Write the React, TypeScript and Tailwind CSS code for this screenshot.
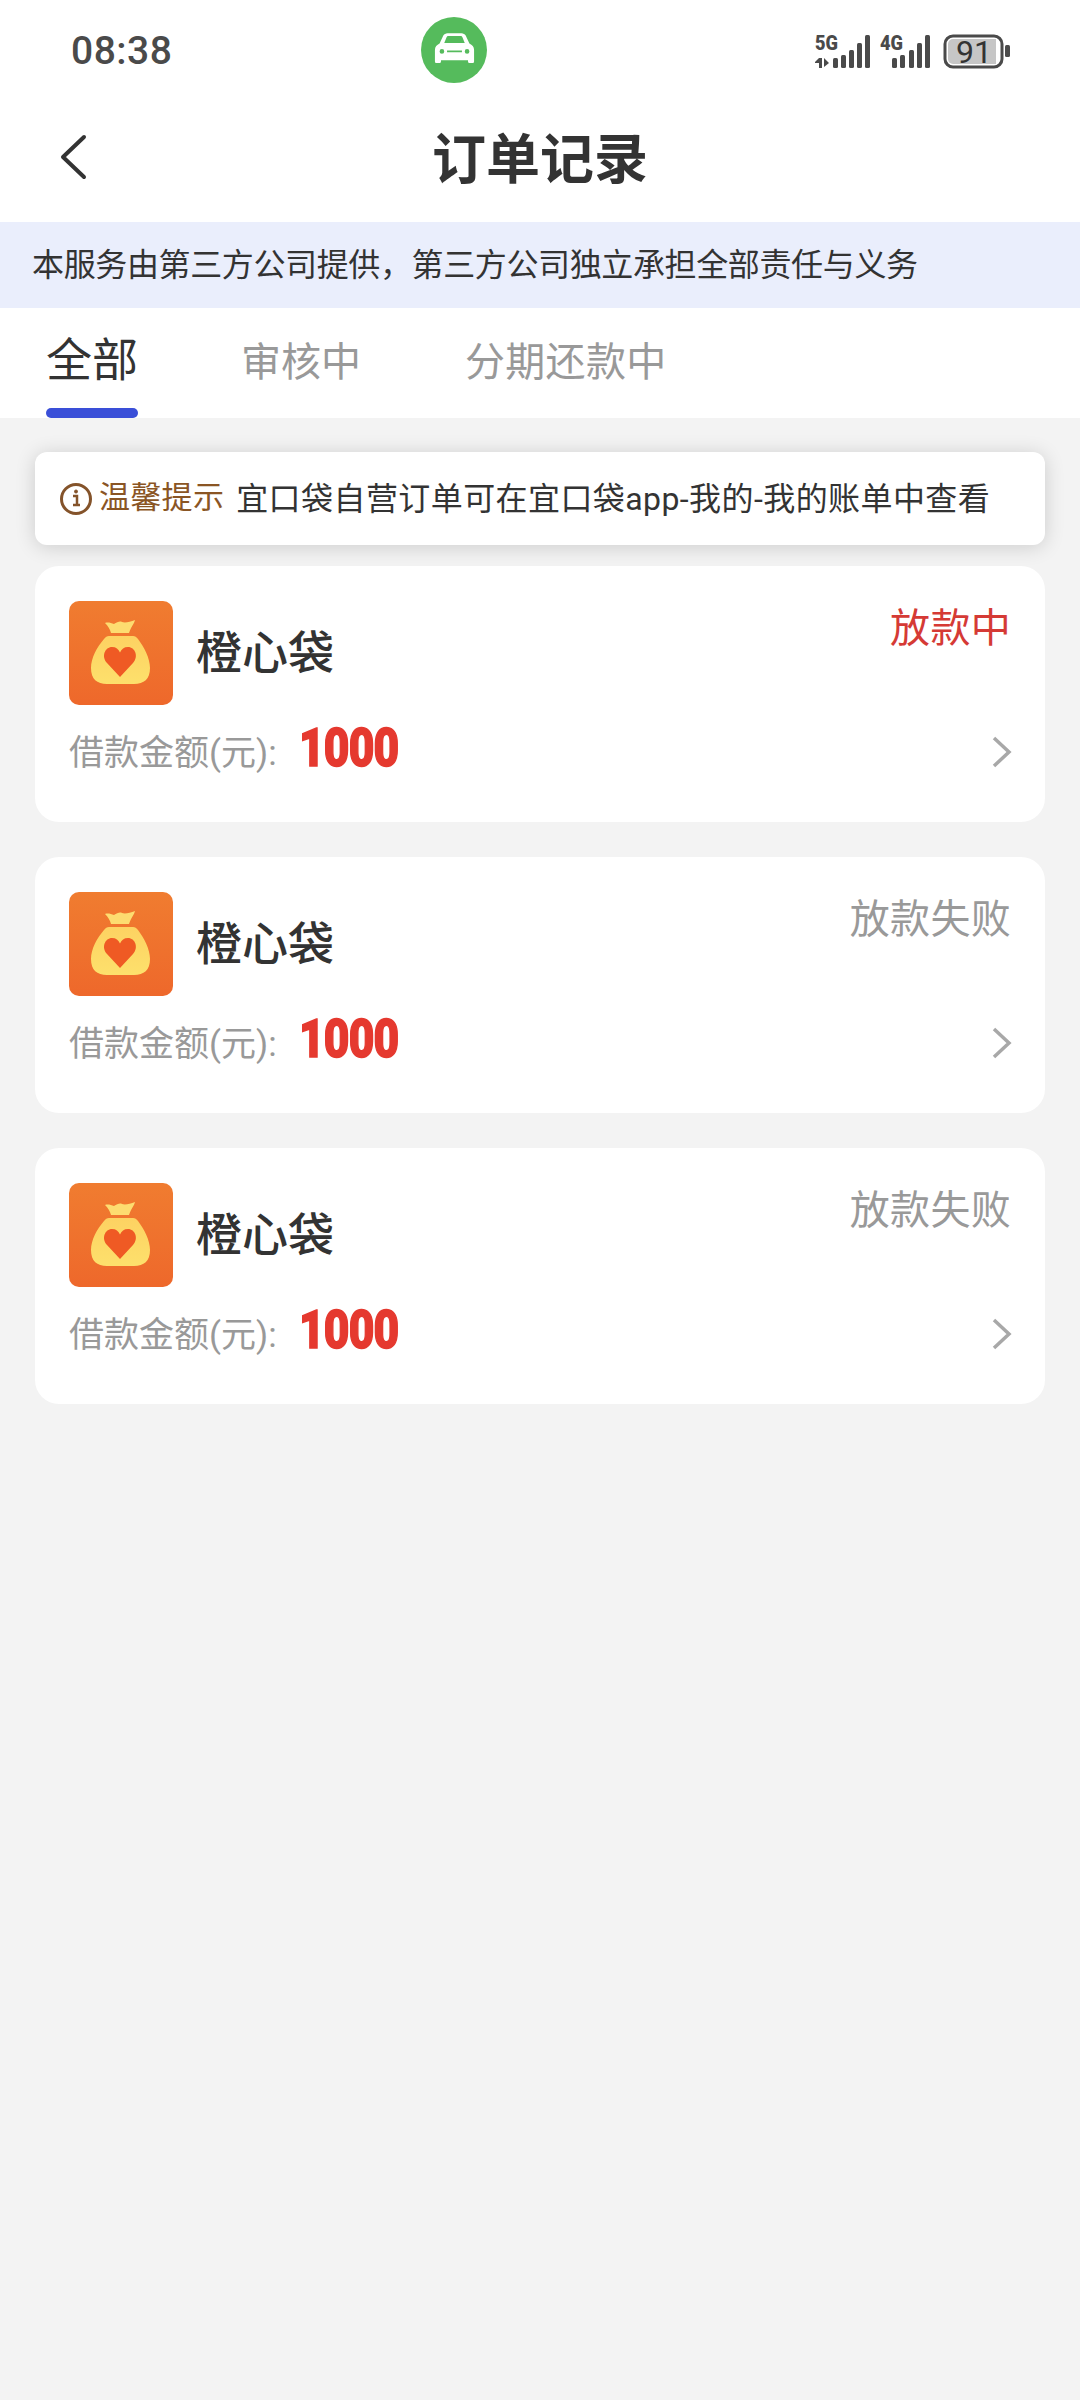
const CJK = "font-['Roboto','Noto_Sans_CJK_SC',sans-serif]";

const orders = [
  { id: 1, status: '放款中', failed: false },
  { id: 2, status: '放款失败', failed: true },
  { id: 3, status: '放款失败', failed: true },
];

const CarBadge = () => (
  <div className="flex h-[66px] w-[66px] items-center justify-center rounded-full bg-[#55bb5c]">
    <svg width="41" height="34" viewBox="0 0 44 36">
      <path
        fill="#fff"
        fillRule="evenodd"
        d="M10 2.5C11 1 12.5 0 14.5 0h15c2 0 3.500 1 4.500 2.500L38 11c3 1.500 5 3.500 5 7v12c0 1.500-.7 2-2 2h-2.500c-1.300 0-2-.7-2-2v-1h-29v1c0 1.300-.7 2-2 2H3c-1.300 0-2-.5-2-2V18c0-3.500 2-5.500 5-7z M11 10.500h22l-2.500-6.200c-.4-.9-1-1.300-2-1.300H15.500c-1 0-1.600.4-2 1.300z M6 19.500a2.500 2.500 0 1 0 5 0a2.500 2.500 0 1 0-5 0z M33 19.500a2.500 2.500 0 1 0 5 0a2.500 2.500 0 1 0-5 0z M14 18.500h16v2H14z"
      />
    </svg>
  </div>
);

const StatusIcons = () => (
  <svg width="200" height="44" viewBox="812 28 200 44">
    <g fill="#4a4a4a">
      <text x="815" y="49" fontFamily="Roboto" fontWeight="900" fontSize="21" textLength="23" lengthAdjust="spacingAndGlyphs">5G</text>
      <path d="M819 57v10h3V57zM815 61l4-4v5h-4zM824 57l5 5-5 4z" />
      <rect x="833" y="57" width="5" height="10" rx="1.500" />
      <rect x="841" y="54" width="5" height="13" rx="1.500" />
      <rect x="849" y="49" width="5" height="18" rx="1.500" />
      <rect x="857" y="42" width="5" height="25" rx="1.500" />
      <rect x="865" y="34" width="5" height="33" rx="1.500" />
      <text x="880" y="49" fontFamily="Roboto" fontWeight="900" fontSize="21" textLength="23" lengthAdjust="spacingAndGlyphs">4G</text>
      <rect x="892" y="57" width="5" height="10" rx="1.500" />
      <rect x="900" y="54" width="5" height="13" rx="1.500" />
      <rect x="909" y="49" width="5" height="18" rx="1.500" />
      <rect x="917" y="42" width="5" height="25" rx="1.500" />
      <rect x="925" y="34" width="5" height="33" rx="1.500" />
    </g>
    <rect x="945" y="35" width="57" height="31" rx="8" fill="#fff" stroke="#4a4a4a" strokeWidth="3" />
    <path d="M948 43a5 5 0 0 1 5-5h43v25h-43a5 5 0 0 1-5-5z" fill="#c6c6c6" />
    <rect x="1005" y="44" width="5" height="12" rx="1.500" fill="#4a4a4a" />
    <text x="956" y="62" fontFamily="Roboto" fontSize="32" fill="#333">91</text>
  </svg>
);

const BagIcon = () => (
  <div className="h-[104px] w-[104px] shrink-0 overflow-hidden rounded-[10px] bg-gradient-to-b from-[#f07c30] to-[#ee682b]">
    <svg width="104" height="104" viewBox="0 0 104 104">
      <defs>
        <linearGradient id="bag" x1="0" y1="0" x2="0" y2="1">
          <stop offset="0" stopColor="#fdd262" />
          <stop offset="1" stopColor="#fde06c" />
        </linearGradient>
      </defs>
      <path d="M36 22c3-1 6 0 9 1 3-2 6-3 8-2 3 1 8 0 13-2-1 4-4 7-6 13H42c-1-4-3-7-6-10z" fill="#fddc70" />
      <path d="M40 35h24c2 0 3.500 1 5 3C75 46 81 57 81 67c0 11-6 16-16 16H38C28 83 22 78 22 67c0-10 6-21 13-29 1.500-2 3-3 5-3z" fill="url(#bag)" />
      <path d="M51 76 38 62C32 55.500 36 46 43 46c4 0 6.500 2 8 5.500C52.500 48 55 46 59 46c7 0 11 9.500 5 16z" fill="#ef5a24" />
    </svg>
  </div>
);

const OrderCard = ({ status, failed }: { status: string; failed: boolean }) => (
  <div className="h-[256px] rounded-[24px] bg-white pl-[34px] pr-[33px] pt-[35px]">
    <div className="flex items-start justify-between">
      <div className="flex items-center gap-[23px]">
        <BagIcon />
        <span className="text-[46px] font-medium leading-none text-[#333]">橙心袋</span>
      </div>
      <span className={`mr-[1px] text-[40px] tracking-[0.3px] leading-[56px] ${failed ? 'text-[#999]' : 'text-[#d53a35]'}`}>{status}</span>
    </div>
    <div className="mt-[16px] flex items-center">
      <span className="pt-[3px] text-[35px] leading-[60px] text-[#999]">借款金额(元):</span>
      <span className="ml-[22px] -mt-[9px] origin-left scale-x-[0.82] text-[54px] font-black leading-[60px] tracking-[-1px] text-[#e5392f] [-webkit-text-stroke:1.5px_#e5392f] [font-family:Roboto]">1000</span>
      <svg className="ml-auto -mt-[2px]" width="20" height="32" viewBox="0 0 20 32" fill="none" stroke="#a8a8a8" strokeWidth="3.500">
        <path d="M2 2l15 14L2 30" />
      </svg>
    </div>
  </div>
);

export default function App() {
  return (
    <div className={`flex h-[2400px] w-[1080px] flex-col overflow-hidden bg-[#f3f3f3] ${CJK}`}>
      <div className="bg-white">
        <div className="flex h-[100px] items-center">
          <span className="w-[421px] pl-[71px] pt-[3px] text-[39px] font-medium tracking-[0.5px] text-[#4a4a4a]">08:38</span>
          <CarBadge />
          <div className="ml-auto mr-[68px] mt-[2px]">
            <StatusIcons />
          </div>
        </div>
        <div className="relative flex h-[122px] items-center justify-center">
          <svg className="absolute left-[60px] top-[34px]" width="28" height="46" viewBox="0 0 28 46" fill="none" stroke="#333" strokeWidth="4" strokeLinecap="round" strokeLinejoin="round">
            <path d="M24 3 3 23l21 20" />
          </svg>
          <span className="text-[54px] font-bold leading-none text-[#333]">订单记录</span>
        </div>
        <div className="flex h-[86px] items-center bg-[#eaeefc] pl-[32px] text-[32px] tracking-[-0.37px] text-[#333]">
          本服务由第三方公司提供，第三方公司独立承担全部责任与义务
        </div>
        <div className="flex h-[110px] pl-[46px]">
          <div className="relative w-[92px] pt-[20px] text-center text-[46px] leading-[64px] text-[#333]">
            全部
            <div className="absolute bottom-0 left-0 h-[10px] w-[92px] rounded-[5px] bg-[#3a4fd8]" />
          </div>
          <div className="ml-[103px] pt-[24px] text-[40px] leading-[62px] text-[#999]">审核中</div>
          <div className="ml-[104px] pt-[24px] text-[40px] leading-[62px] tracking-[0.3px] text-[#999]">分期还款中</div>
        </div>
      </div>
      <div className="flex flex-col px-[35px] pt-[34px]">
        <div className="flex h-[93px] items-center rounded-[12px] bg-white pl-[24px] shadow-[0_2px_20px_rgba(0,0,0,0.16)]">
          <svg width="34" height="34" viewBox="0 0 34 34" fill="none" stroke="#84532a">
            <circle cx="17" cy="17" r="14.500" strokeWidth="3" />
            <path d="M14 14h4v9m-4 0h7" strokeWidth="2.500" />
            <circle cx="17" cy="9.500" r="1.500" fill="#84532a" />
          </svg>
          <span className="ml-[6px] text-[31px] tracking-[0.3px] text-[#8a5524]">温馨提示</span>
          <span className="ml-[12px] text-[32px] tracking-[0.42px] text-[#333]">宜口袋自营订单可在宜口袋app-我的-我的账单中查看</span>
        </div>
        <div className="mt-[21px] flex flex-col gap-[35px]">
          {orders.map((o) => (
            <OrderCard key={o.id} status={o.status} failed={o.failed} />
          ))}
        </div>
      </div>
    </div>
  );
}
